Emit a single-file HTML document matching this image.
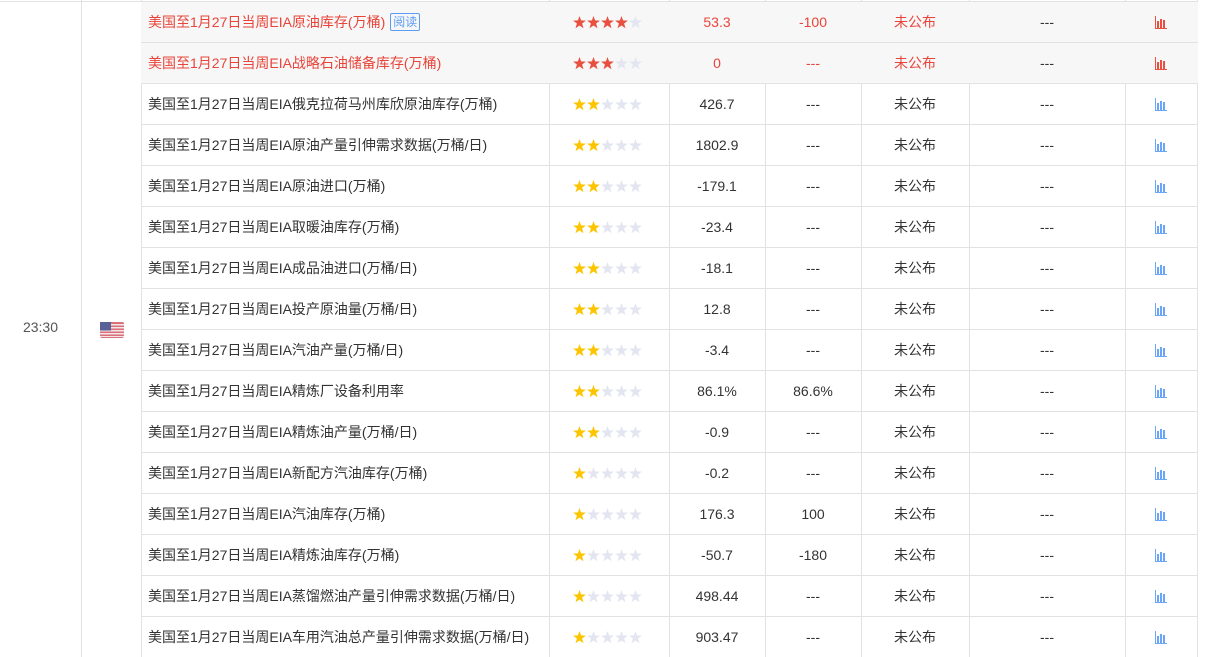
<!DOCTYPE html>
<html><head><meta charset="utf-8"><style>
*{margin:0;padding:0;box-sizing:border-box}
body{width:1205px;height:657px;overflow:hidden;background:#fff;font-family:"Liberation Sans","Noto Sans CJK SC",sans-serif;font-size:14px;color:#333;position:relative}
.vl{position:absolute;top:0;bottom:0;width:1px;background:#e2e2e2}
.row{position:absolute;left:141px;width:1057px;height:41px;border-top:1px solid #e2e2e2}
.row.hl{background:#f7f7f7;color:#e8443a}
.c{position:absolute;top:0;height:40px;line-height:40px;text-align:center}
.n{left:7px;text-align:left;white-space:nowrap}
.s{left:432px;top:14px;height:13px;line-height:0}
.v1{left:528px;width:96px}.v2{left:624px;width:96px}.v3{left:720px;width:108px}.v4{left:828px;width:156px}
.ic{left:1014px;top:14px;height:13px;line-height:0}
.tag{display:inline-block;border:1px solid #5b9cf6;color:#5b9cf6;border-radius:2px;font-size:12px;line-height:16px;padding:0 2px;margin-left:5px;vertical-align:1px}
</style></head><body>
<svg width="0" height="0" style="position:absolute"><defs>
<path id="st" d="M6.5 0 L8.1 4.4 L12.9 4.6 L9.1 7.5 L10.5 12.2 L6.5 9.5 L2.5 12.2 L3.9 7.5 L0.1 4.6 L4.9 4.4Z"/>
<g id="chr"><rect x="0" y="0" width="1" height="13"/><rect x="0" y="12" width="12" height="1"/><rect x="2" y="5" width="2" height="7"/><rect x="5" y="3" width="2" height="9"/><rect x="8" y="4" width="2" height="8"/></g>
</defs></svg>
<div style="position:absolute;left:0;top:1px;width:1198px;height:1px;background:#e2e2e2"></div>
<div class="vl" style="left:81px"></div>
<div class="vl" style="left:141px"></div>
<div class="vl" style="left:549px"></div>
<div class="vl" style="left:669px"></div>
<div class="vl" style="left:765px"></div>
<div class="vl" style="left:861px"></div>
<div class="vl" style="left:969px"></div>
<div class="vl" style="left:1125px"></div>
<div class="vl" style="left:1197px"></div>
<div style="position:absolute;left:0;width:81px;top:319px;text-align:center;color:#555">23:30</div>
<svg style="position:absolute;left:100px;top:322px" width="24" height="16" viewBox="0 0 24 16"><rect width="24" height="16" rx="2" fill="#d9707a"/><g fill="#f4e6e8"><rect y="2" width="24" height="1.5"/><rect y="5" width="24" height="1.5"/><rect y="8" width="24" height="1.5"/><rect y="11" width="24" height="1.5"/><rect y="14" width="24" height="1"/></g><rect width="11" height="8.5" fill="#5a6196"/></svg>

<div class="row hl" style="top:1px"><div class="c n">美国至1月27日当周EIA原油库存(万桶)<span class="tag">阅读</span></div><svg class="c s" width="70" height="13"><g fill="#e8503f"><use href="#st"/><use href="#st" x="14"/><use href="#st" x="28"/><use href="#st" x="42"/></g><use href="#st" x="56" fill="#e3e6f0"/></svg><div class="c v1">53.3</div><div class="c v2">-100</div><div class="c v3">未公布</div><div class="c v4" style="color:#333">---</div><svg class="c ic" width="12" height="13"><use href="#chr" fill="#e8503f"/></svg></div>
<div class="row hl" style="top:42px"><div class="c n">美国至1月27日当周EIA战略石油储备库存(万桶)</div><svg class="c s" width="70" height="13"><g fill="#e8503f"><use href="#st"/><use href="#st" x="14"/><use href="#st" x="28"/></g><g fill="#e3e6f0"><use href="#st" x="42"/><use href="#st" x="56"/></g></svg><div class="c v1">0</div><div class="c v2">---</div><div class="c v3">未公布</div><div class="c v4" style="color:#333">---</div><svg class="c ic" width="12" height="13"><use href="#chr" fill="#e8503f"/></svg></div>

<div class="row" style="top:83px"><div class="c n">美国至1月27日当周EIA俄克拉荷马州库欣原油库存(万桶)</div><svg class="c s" width="70" height="13"><g fill="#fcc500"><use href="#st"/><use href="#st" x="14"/></g><g fill="#e3e6f0"><use href="#st" x="28"/><use href="#st" x="42"/><use href="#st" x="56"/></g></svg><div class="c v1">426.7</div><div class="c v2">---</div><div class="c v3">未公布</div><div class="c v4">---</div><svg class="c ic" width="12" height="13"><use href="#chr" fill="#6aa5f7"/></svg></div>
<div class="row" style="top:124px"><div class="c n">美国至1月27日当周EIA原油产量引伸需求数据(万桶/日)</div><svg class="c s" width="70" height="13"><g fill="#fcc500"><use href="#st"/><use href="#st" x="14"/></g><g fill="#e3e6f0"><use href="#st" x="28"/><use href="#st" x="42"/><use href="#st" x="56"/></g></svg><div class="c v1">1802.9</div><div class="c v2">---</div><div class="c v3">未公布</div><div class="c v4">---</div><svg class="c ic" width="12" height="13"><use href="#chr" fill="#6aa5f7"/></svg></div>
<div class="row" style="top:165px"><div class="c n">美国至1月27日当周EIA原油进口(万桶)</div><svg class="c s" width="70" height="13"><g fill="#fcc500"><use href="#st"/><use href="#st" x="14"/></g><g fill="#e3e6f0"><use href="#st" x="28"/><use href="#st" x="42"/><use href="#st" x="56"/></g></svg><div class="c v1">-179.1</div><div class="c v2">---</div><div class="c v3">未公布</div><div class="c v4">---</div><svg class="c ic" width="12" height="13"><use href="#chr" fill="#6aa5f7"/></svg></div>
<div class="row" style="top:206px"><div class="c n">美国至1月27日当周EIA取暖油库存(万桶)</div><svg class="c s" width="70" height="13"><g fill="#fcc500"><use href="#st"/><use href="#st" x="14"/></g><g fill="#e3e6f0"><use href="#st" x="28"/><use href="#st" x="42"/><use href="#st" x="56"/></g></svg><div class="c v1">-23.4</div><div class="c v2">---</div><div class="c v3">未公布</div><div class="c v4">---</div><svg class="c ic" width="12" height="13"><use href="#chr" fill="#6aa5f7"/></svg></div>
<div class="row" style="top:247px"><div class="c n">美国至1月27日当周EIA成品油进口(万桶/日)</div><svg class="c s" width="70" height="13"><g fill="#fcc500"><use href="#st"/><use href="#st" x="14"/></g><g fill="#e3e6f0"><use href="#st" x="28"/><use href="#st" x="42"/><use href="#st" x="56"/></g></svg><div class="c v1">-18.1</div><div class="c v2">---</div><div class="c v3">未公布</div><div class="c v4">---</div><svg class="c ic" width="12" height="13"><use href="#chr" fill="#6aa5f7"/></svg></div>
<div class="row" style="top:288px"><div class="c n">美国至1月27日当周EIA投产原油量(万桶/日)</div><svg class="c s" width="70" height="13"><g fill="#fcc500"><use href="#st"/><use href="#st" x="14"/></g><g fill="#e3e6f0"><use href="#st" x="28"/><use href="#st" x="42"/><use href="#st" x="56"/></g></svg><div class="c v1">12.8</div><div class="c v2">---</div><div class="c v3">未公布</div><div class="c v4">---</div><svg class="c ic" width="12" height="13"><use href="#chr" fill="#6aa5f7"/></svg></div>
<div class="row" style="top:329px"><div class="c n">美国至1月27日当周EIA汽油产量(万桶/日)</div><svg class="c s" width="70" height="13"><g fill="#fcc500"><use href="#st"/><use href="#st" x="14"/></g><g fill="#e3e6f0"><use href="#st" x="28"/><use href="#st" x="42"/><use href="#st" x="56"/></g></svg><div class="c v1">-3.4</div><div class="c v2">---</div><div class="c v3">未公布</div><div class="c v4">---</div><svg class="c ic" width="12" height="13"><use href="#chr" fill="#6aa5f7"/></svg></div>
<div class="row" style="top:370px"><div class="c n">美国至1月27日当周EIA精炼厂设备利用率</div><svg class="c s" width="70" height="13"><g fill="#fcc500"><use href="#st"/><use href="#st" x="14"/></g><g fill="#e3e6f0"><use href="#st" x="28"/><use href="#st" x="42"/><use href="#st" x="56"/></g></svg><div class="c v1">86.1%</div><div class="c v2">86.6%</div><div class="c v3">未公布</div><div class="c v4">---</div><svg class="c ic" width="12" height="13"><use href="#chr" fill="#6aa5f7"/></svg></div>
<div class="row" style="top:411px"><div class="c n">美国至1月27日当周EIA精炼油产量(万桶/日)</div><svg class="c s" width="70" height="13"><g fill="#fcc500"><use href="#st"/><use href="#st" x="14"/></g><g fill="#e3e6f0"><use href="#st" x="28"/><use href="#st" x="42"/><use href="#st" x="56"/></g></svg><div class="c v1">-0.9</div><div class="c v2">---</div><div class="c v3">未公布</div><div class="c v4">---</div><svg class="c ic" width="12" height="13"><use href="#chr" fill="#6aa5f7"/></svg></div>
<div class="row" style="top:452px"><div class="c n">美国至1月27日当周EIA新配方汽油库存(万桶)</div><svg class="c s" width="70" height="13"><use href="#st" fill="#fcc500"/><g fill="#e3e6f0"><use href="#st" x="14"/><use href="#st" x="28"/><use href="#st" x="42"/><use href="#st" x="56"/></g></svg><div class="c v1">-0.2</div><div class="c v2">---</div><div class="c v3">未公布</div><div class="c v4">---</div><svg class="c ic" width="12" height="13"><use href="#chr" fill="#6aa5f7"/></svg></div>
<div class="row" style="top:493px"><div class="c n">美国至1月27日当周EIA汽油库存(万桶)</div><svg class="c s" width="70" height="13"><use href="#st" fill="#fcc500"/><g fill="#e3e6f0"><use href="#st" x="14"/><use href="#st" x="28"/><use href="#st" x="42"/><use href="#st" x="56"/></g></svg><div class="c v1">176.3</div><div class="c v2">100</div><div class="c v3">未公布</div><div class="c v4">---</div><svg class="c ic" width="12" height="13"><use href="#chr" fill="#6aa5f7"/></svg></div>
<div class="row" style="top:534px"><div class="c n">美国至1月27日当周EIA精炼油库存(万桶)</div><svg class="c s" width="70" height="13"><use href="#st" fill="#fcc500"/><g fill="#e3e6f0"><use href="#st" x="14"/><use href="#st" x="28"/><use href="#st" x="42"/><use href="#st" x="56"/></g></svg><div class="c v1">-50.7</div><div class="c v2">-180</div><div class="c v3">未公布</div><div class="c v4">---</div><svg class="c ic" width="12" height="13"><use href="#chr" fill="#6aa5f7"/></svg></div>
<div class="row" style="top:575px"><div class="c n">美国至1月27日当周EIA蒸馏燃油产量引伸需求数据(万桶/日)</div><svg class="c s" width="70" height="13"><use href="#st" fill="#fcc500"/><g fill="#e3e6f0"><use href="#st" x="14"/><use href="#st" x="28"/><use href="#st" x="42"/><use href="#st" x="56"/></g></svg><div class="c v1">498.44</div><div class="c v2">---</div><div class="c v3">未公布</div><div class="c v4">---</div><svg class="c ic" width="12" height="13"><use href="#chr" fill="#6aa5f7"/></svg></div>
<div class="row" style="top:616px"><div class="c n">美国至1月27日当周EIA车用汽油总产量引伸需求数据(万桶/日)</div><svg class="c s" width="70" height="13"><use href="#st" fill="#fcc500"/><g fill="#e3e6f0"><use href="#st" x="14"/><use href="#st" x="28"/><use href="#st" x="42"/><use href="#st" x="56"/></g></svg><div class="c v1">903.47</div><div class="c v2">---</div><div class="c v3">未公布</div><div class="c v4">---</div><svg class="c ic" width="12" height="13"><use href="#chr" fill="#6aa5f7"/></svg></div>
</body></html>
